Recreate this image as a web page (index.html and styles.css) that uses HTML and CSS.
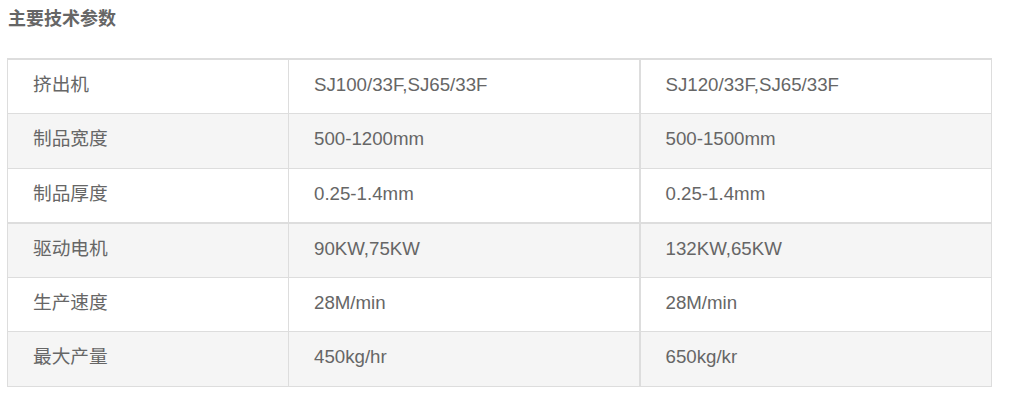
FILE: index.html
```html
<!DOCTYPE html>
<html lang="zh-CN">
<head>
<meta charset="utf-8">
<link rel="stylesheet" href="styles.css">
</head>
<body>
<div class="page">
  <h3 class="title">主要技术参数</h3>
  <table class="spec">
    <colgroup><col class="c1"><col class="c2"><col class="c3"></colgroup>
    <tbody>
      <tr><td>挤出机</td><td>SJ100/33F,SJ65/33F</td><td class="last">SJ120/33F,SJ65/33F</td></tr>
      <tr class="alt"><td>制品宽度</td><td>500-1200mm</td><td class="last">500-1500mm</td></tr>
      <tr class="split"><td>制品厚度</td><td>0.25-1.4mm</td><td class="last">0.25-1.4mm</td></tr>
      <tr class="alt"><td>驱动电机</td><td>90KW,75KW</td><td class="last">132KW,65KW</td></tr>
      <tr><td>生产速度</td><td>28M/min</td><td class="last">28M/min</td></tr>
      <tr class="alt"><td>最大产量</td><td>450kg/hr</td><td class="last">650kg/kr</td></tr>
    </tbody>
  </table>
</div>
</body>
</html>
```
FILE: styles.css
```css
html, body { margin: 0; padding: 0; background: #fff; }
.page {
  padding: 8px 18px 0 7px;
  font-family: "Liberation Sans", Arial, "Noto Sans CJK SC", sans-serif;
  color: #666;
}
.title {
  margin: 0 0 0 1px;
  font-size: 18px;
  line-height: 22px;
  font-weight: bold;
  color: #666;
}
.spec {
  margin-top: 28px;
  width: 984px;
  border-collapse: collapse;
  border-top: 2px solid #ddd;
  table-layout: fixed;
}
.c1 { width: 281px; }
.c2 { width: 351px; }
.c3 { width: 352px; }
.spec td {
  border: 1px solid #ddd;
  height: 54.5px;
  box-sizing: border-box;
  padding: 0 0 3px 25px;
  font-size: 18.7px;
  line-height: 24px;
  color: #666;
  vertical-align: middle;
}
.spec td.last { border-left: 2px solid #ddd; }
.spec tr.alt td { background: #f5f5f5; }
.spec tr.split td { border-bottom: 2px solid #ddd; }
```
